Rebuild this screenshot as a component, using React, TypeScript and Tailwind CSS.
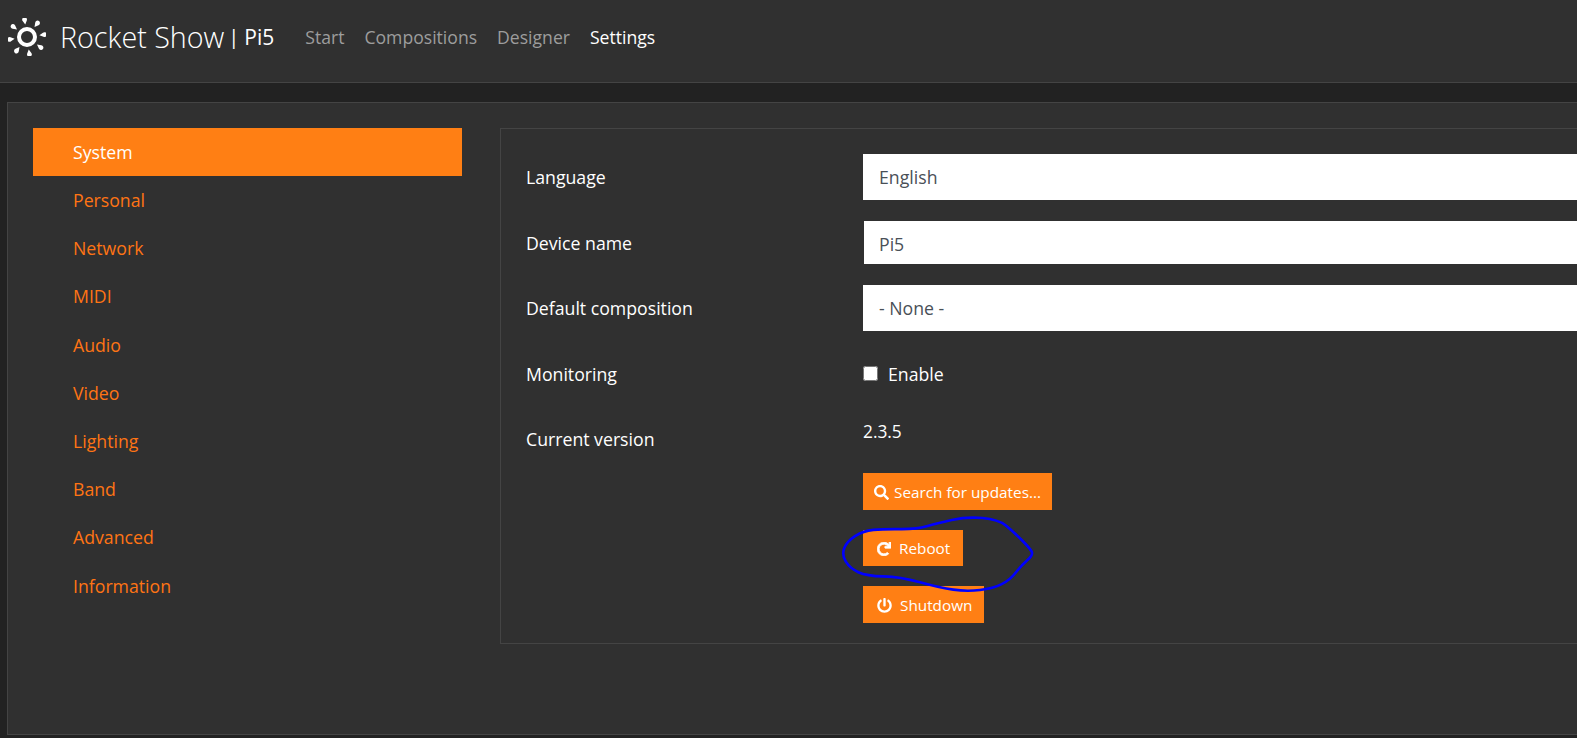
import React from 'react';
import { FaSearch, FaRedo, FaPowerOff } from 'react-icons/fa';

const navItems = [
  { label: 'Start', active: false },
  { label: 'Compositions', active: false },
  { label: 'Designer', active: false },
  { label: 'Settings', active: true },
];

const menuItems = ['System', 'Personal', 'Network', 'MIDI', 'Audio', 'Video', 'Lighting', 'Band', 'Advanced', 'Information'];

const rayAngles = [-8, 37, 82, 127, 172, 217, 262, 307];

const inkPoints = [
  [130, 212], [190, 207], [290, 208], [350, 190], [440, 170], [535, 178], [580, 215], [630, 265],
  [640, 285], [605, 315], [570, 360], [520, 385], [440, 395], [360, 383], [240, 350], [140, 348],
  [90, 325], [65, 285], [80, 245],
];

// smooth closed curve through the midpoints of the hand-drawn marker outline
const inkPath = () => {
  const mid = (a: number[], b: number[]) => `${(a[0] + b[0]) / 2} ${(a[1] + b[1]) / 2}`;
  const n = inkPoints.length;
  let d = `M ${mid(inkPoints[n - 1], inkPoints[0])}`;
  inkPoints.forEach((p, i) => {
    d += ` Q ${p[0]} ${p[1]} ${mid(p, inkPoints[(i + 1) % n])}`;
  });
  return d + ' Z';
};

const Logo = () => (
  <svg width="38" height="38" viewBox="0 0 38 38" className="shrink-0" fill="#fff">
    <circle cx="19" cy="19" r="8" fill="none" stroke="#fff" strokeWidth="4" />
    {rayAngles.map((angle) => (
      <path key={angle} d="M19 6.5 L16.9 2.6 A2.4 2.4 0 1 1 21.1 2.6 Z" transform={`rotate(${angle} 19 19)`} />
    ))}
  </svg>
);

const Label = ({ children, className = '' }: { children: React.ReactNode; className?: string }) => (
  <label className={`w-[337px] shrink-0 text-[17.7px] text-white ${className}`}>{children}</label>
);

const fieldClass = 'h-full w-full appearance-none rounded-none bg-white text-[17.7px] text-[#495057] outline-none';

const buttonClass = 'flex items-center bg-[#ff7f14] pt-[1px] text-[15.3px]';

const App: React.FC = () => {
  return (
    <div className="relative h-[738px] w-[1577px] overflow-hidden bg-[#222222] font-['Open_Sans','Noto_Sans',sans-serif] text-white">
      <header className="flex h-[83px] items-center border-b border-[#444444] bg-[#303030] pb-[8px] pl-[8px]">
        <Logo />
        <span className="ml-[14px] text-[28.7px] font-[350] leading-none">Rocket Show</span>
        <span className="ml-[4px] text-[20px] leading-none">|</span>
        <span className="ml-[5px] text-[21px] leading-none">Pi5</span>
        <nav className="ml-[31px] flex gap-[20px] text-[17.6px]">
          {navItems.map((item) => (
            <span key={item.label} className={item.active ? 'text-white' : 'text-[#9d9d9d]'}>
              {item.label}
            </span>
          ))}
        </nav>
      </header>

      <main className="mt-[19px] ml-[7px] flex h-[633px] w-[1640px] border border-[#444444] bg-[#303030] pt-[25px] pl-[25px]">
        <ul className="w-[429px] shrink-0 text-[17.7px] text-[#ff7414]">
          {menuItems.map((item, i) => (
            <li
              key={item}
              className={`flex h-[48.2px] items-center pl-[40px] ${i === 0 ? 'bg-[#ff7f14] text-white' : ''}`}
            >
              {item}
            </li>
          ))}
        </ul>

        <section className="ml-[38px] h-[516px] flex-1 border border-[#444444] pt-[25px] pl-[25px]">
          <div className="flex h-[46px] items-center">
            <Label>Language</Label>
            <select className={`${fieldClass} pl-[16px]`} defaultValue="en">
              <option value="en">English</option>
            </select>
          </div>
          <div className="mt-[21px] flex h-[43px] items-center">
            <Label className="pt-[1px]">Device name</Label>
            <input className={`${fieldClass} ml-[1px] pt-[2px] pl-[15px]`} defaultValue="Pi5" />
          </div>
          <div className="mt-[21px] flex h-[46px] items-center">
            <Label>Default composition</Label>
            <select className={`${fieldClass} pl-[16px]`} defaultValue="none">
              <option value="none">- None -</option>
            </select>
          </div>
          <div className="mt-[21px] flex h-[44px] items-center">
            <Label>Monitoring</Label>
            <label className="flex items-center gap-[10px] text-[17.7px]">
              <input type="checkbox" className="h-[15px] w-[15px]" />
              Enable
            </label>
          </div>
          <div className="mt-[21px] flex items-start">
            <div className="w-[337px] shrink-0 pt-[9px] text-[17.7px]">Current version</div>
            <div className="flex flex-col items-start">
              <div className="flex h-[29px] items-center text-[17.3px]">2.3.5</div>
              <button className={`${buttonClass} mt-[27px] h-[37px] gap-[5px] pr-[11px] pl-[11px]`}>
                <FaSearch size={15} />
                Search for updates...
              </button>
              <button className={`${buttonClass} mt-[20px] h-[36px] gap-[8px] pr-[13px] pl-[14px]`}>
                <FaRedo size={14} stroke="currentColor" strokeWidth={30} />
                Reboot
              </button>
              <button className={`${buttonClass} mt-[20px] h-[37px] gap-[8px] pr-[12px] pl-[14px]`}>
                <FaPowerOff size={15} />
                Shutdown
              </button>
            </div>
          </div>
        </section>
      </main>

      {/* marker scribble drawn over the screenshot */}
      <svg className="absolute top-[460px] left-[820px]" width="260" height="180" viewBox="0 0 780 540" fill="none">
        <path d={inkPath()} stroke="#0000ff" strokeWidth="8" strokeLinejoin="round" />
      </svg>
    </div>
  );
};

export default App;
